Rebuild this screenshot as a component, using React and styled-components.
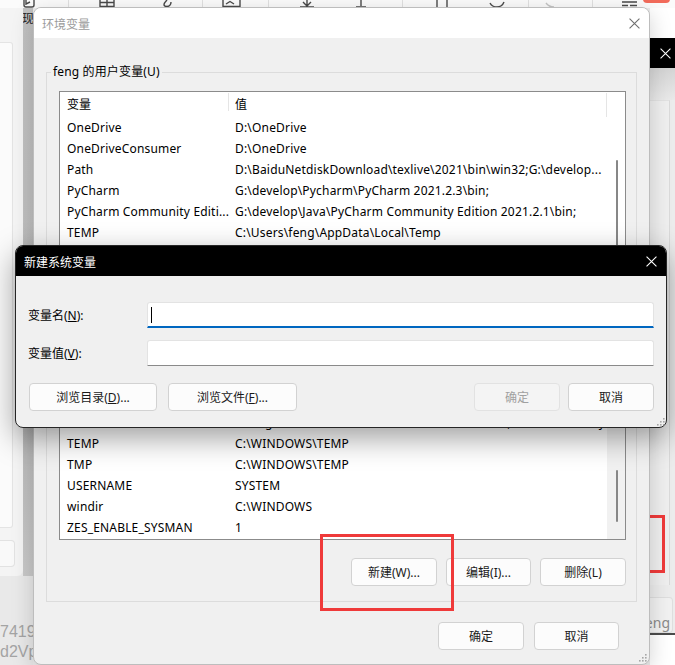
import React from 'react'
import styled, { createGlobalStyle } from 'styled-components'

const GlobalStyle = createGlobalStyle`
  html, body { margin: 0; padding: 0; }
  body {
    width: 675px;
    height: 665px;
    overflow: hidden;
    font-family: "Noto Sans", "Noto Sans CJK SC", sans-serif;
    font-size: 12px;
    color: #000;
  }
  * { box-sizing: border-box; }
`

const userVars = [
  ['OneDrive', 'D:\\OneDrive'],
  ['OneDriveConsumer', 'D:\\OneDrive'],
  ['Path', 'D:\\BaiduNetdiskDownload\\texlive\\2021\\bin\\win32;G:\\develop...'],
  ['PyCharm', 'G:\\develop\\Pycharm\\PyCharm 2021.2.3\\bin;'],
  ['PyCharm Community Editi...', 'G:\\develop\\Java\\PyCharm Community Edition 2021.2.1\\bin;'],
  ['TEMP', 'C:\\Users\\feng\\AppData\\Local\\Temp'],
]

const sysVars = [
  ['PSModulePath', '%ProgramFiles%\\WindowsPowerShell\\Modules;C:\\WINDOWS\\system32\\...'],
  ['TEMP', 'C:\\WINDOWS\\TEMP'],
  ['TMP', 'C:\\WINDOWS\\TEMP'],
  ['USERNAME', 'SYSTEM'],
  ['windir', 'C:\\WINDOWS'],
  ['ZES_ENABLE_SYSMAN', '1'],
]

/* ---------- desktop behind the dialogs ---------- */

const Desktop = styled.div`
  position: relative;
  width: 675px;
  height: 665px;
  overflow: hidden;
  display: grid;
  grid-template-columns: 33px 1fr 25px;
  grid-template-rows: 8px 1fr;
  background: #ececec;
`

const Toolbar = styled.div`
  grid-column: 1 / -1;
  background: #fbfbfb;
  overflow: hidden;
  svg { display: block; }
`

const LeftPane = styled.div`
  grid-column: 1;
  grid-row: 2;
  display: flex;
  flex-direction: column;
`

const AppWindow = styled.div`
  height: 568px;
  display: flex;
`

const AppContent = styled.div`
  width: 23px;
  background: #f4f4f4;
  border-bottom-right-radius: 6px;
  padding-top: 34px;
  display: flex;
  flex-direction: column;
  gap: 12px;
`

const SideCard = styled.div`
  width: 13px;
  height: 486px;
  background: #fbfbfb;
  border: 1px solid #e4e4e4;
  border-left: none;
  border-radius: 0 3px 3px 0;
`

const SideButton = styled.div`
  width: 15px;
  height: 27px;
  background: #f9f9f9;
  border: 1px solid #e2e2e2;
  border-left: none;
  border-radius: 0 4px 4px 0;
`

const ShadowBand = styled.div`
  width: 10px;
  background: linear-gradient(#c2c2c2, #bdbdbd 80%, #c9c9c9);
  overflow: hidden;
  padding-top: 2px;
  span {
    display: block;
    margin-left: -1px;
    color: #222;
    font-family: "Noto Sans CJK SC", sans-serif;
    font-size: 12px;
    line-height: 16px;
  }
`

const LeftFooter = styled.div`
  flex: 1;
  background: #e9e9e9;
  padding-top: 46px;
  color: #a4a4a4;
  font-family: "Liberation Sans", sans-serif;
  font-size: 16px;
  line-height: 20px;
  white-space: nowrap;
  overflow: hidden;
`

const RightPane = styled.div`
  grid-column: 3;
  grid-row: 2;
  display: flex;
  flex-direction: column;
`

const WhiteStrip = styled.div`
  height: 30px;
  background: #fff;
`

const BlackTab = styled.div`
  height: 30px;
  background: #000;
  display: flex;
  align-items: center;
  padding-left: 10px;
`

const ShadeStrip = styled.div`
  height: 32px;
  background: linear-gradient(#d4d4d4, #e9e9e9);
`

const SidePanel = styled.div`
  height: 485px;
  width: 20px;
  background: #efefef;
  border-top: 1px solid #e2e2e2;
  border-right: 1px solid #dadada;
`

const PanelGap = styled.div`
  height: 12px;
  background: #ececec;
`

const FengButton = styled.div`
  height: 36px;
  width: 23px;
  background: #f1f1f1;
  border: 1px solid #dedede;
  border-left: none;
  border-radius: 0 4px 4px 0;
  display: flex;
  justify-content: flex-end;
  align-items: flex-end;
  padding: 0 2px 1px 0;
  overflow: hidden;
  color: #8a8a8a;
  font-size: 14px;
  line-height: 16px;
`

const DarkLine = styled.div`
  height: 2px;
  background: #4b4b4b;
`

const WhiteBottom = styled.div`
  flex: 1;
  background: #fff;
`

const Annotation = styled.div`
  position: absolute;
  left: ${p => p.$x}px;
  top: ${p => p.$y}px;
  width: ${p => p.$w}px;
  height: ${p => p.$h}px;
  border: 3px solid #ef3a3a;
`

/* ---------- dialogs ---------- */

const Window = styled.div`
  position: absolute;
  left: ${p => p.$x}px;
  top: ${p => p.$y}px;
  width: ${p => p.$w}px;
  height: ${p => p.$h}px;
  background: #f0f0f0;
  border: 1px solid ${p => (p.$active ? '#262626' : '#bdbdbd')};
  border-radius: 8px;
  overflow: hidden;
  box-shadow: ${p => (p.$active ? '0 10px 30px rgba(0,0,0,0.38)' : '0 6px 22px rgba(0,0,0,0.18)')};
  display: flex;
  flex-direction: column;
`

const TitleBar = styled.div`
  height: 30px;
  flex: none;
  display: flex;
  align-items: center;
  justify-content: space-between;
  padding: 0 9px 0 8px;
  background: ${p => (p.$active ? '#000' : '#fff')};
  color: ${p => (p.$active ? '#fff' : '#9b9b9b')};
  font-family: "Noto Sans CJK SC", sans-serif;
  font-size: 12px;
  svg { display: block; }
`

const Body = styled.div`
  flex: 1;
  padding: 26px 12px 0;
  position: relative;
`

const GroupBox = styled.fieldset`
  margin: ${p => p.$top || 0}px 0 0;
  padding: 0 10px ${p => p.$bottom}px 12px;
  border: 1px solid #dcdcdc;
  min-width: 0;
`

const Legend = styled.legend`
  padding: 0 2px;
  margin-left: -8px;
  font-size: 12px;
  line-height: 16px;
  letter-spacing: 0.15px;
`

const ListBox = styled.div`
  margin-top: 11px;
  height: ${p => p.$h}px;
  border: 1px solid #8b8b8b;
  background: #fff;
  display: flex;
  overflow: hidden;
`

const ListMain = styled.div`
  flex: 1;
  min-width: 0;
  display: flex;
  flex-direction: column;
`

const HeaderRow = styled.div`
  height: 24px;
  flex: none;
  display: flex;
`

const HeaderCell = styled.div`
  width: ${p => (p.$w ? `${p.$w}px` : 'auto')};
  flex: ${p => (p.$w ? 'none' : 1)};
  padding-left: ${p => p.$pad}px;
  padding-bottom: 2px;
  display: flex;
  align-items: center;
  font-family: "Noto Sans CJK SC", sans-serif;
  position: relative;
  &::after {
    content: '';
    position: absolute;
    right: 0;
    top: 1px;
    height: ${p => (p.$w ? 18 : 24)}px;
    width: 1px;
    background: #e5e5e5;
  }
`

const Row = styled.div`
  height: 21px;
  flex: none;
  display: flex;
  align-items: center;
  padding-top: 2px;
  white-space: nowrap;
  letter-spacing: 0.18px;
`

const Cell = styled.div`
  width: ${p => (p.$w ? `${p.$w}px` : 'auto')};
  flex: ${p => (p.$w ? 'none' : 1)};
  min-width: 0;
  padding-left: ${p => p.$pad}px;
  overflow: hidden;
`

const ScrollTrack = styled.div`
  width: 18px;
  flex: none;
  background: ${p => p.$bg};
  padding-top: ${p => p.$thumbTop}px;
`

const Thumb = styled.div`
  width: 2px;
  height: ${p => p.$h}px;
  margin-left: 9px;
  border-radius: 1px;
  background: #878787;
`

const ButtonRow = styled.div`
  display: flex;
  justify-content: ${p => p.$justify || 'flex-end'};
  gap: ${p => p.$gap}px;
  margin-top: ${p => p.$top}px;
  padding-right: ${p => p.$right || 0}px;
`

const Group = styled.div`
  display: flex;
  gap: ${p => p.$gap}px;
  margin-left: ${p => p.$left || 0}px;
`

const Button = styled.button`
  width: ${p => p.$w}px;
  height: 28px;
  margin: 0;
  padding: 0;
  border: 1px solid ${p => (p.disabled ? '#e2e2e2' : '#d2d2d2')};
  border-radius: 4px;
  background: ${p => (p.disabled ? '#f4f4f4' : '#fcfcfc')};
  color: ${p => (p.disabled ? '#a0a0a0' : '#1a1a1a')};
  font-family: "Noto Sans", "Noto Sans CJK SC", sans-serif;
  font-size: 12px;
  white-space: nowrap;
`

const FormGrid = styled.div`
  display: grid;
  grid-template-columns: 119px 1fr;
  grid-auto-rows: 26px;
  row-gap: 12px;
  align-items: center;
`

const FieldLabel = styled.label`
  font-family: "Noto Sans", "Noto Sans CJK SC", sans-serif;
  font-size: 12px;
`

const TextField = styled.div`
  height: 26px;
  background: #fff;
  border: 1px solid #e3e3e3;
  border-bottom: ${p => (p.$focus ? '2px solid #0067c0' : '1px solid #8a8a8a')};
  border-radius: 3px 3px 0 0;
  display: flex;
  align-items: center;
  padding-left: 3px;
`

const Caret = styled.span`
  width: 1px;
  height: 16px;
  background: #000;
`

const Grip = styled.svg`
  position: absolute;
  right: ${p => p.$r}px;
  bottom: ${p => p.$b}px;
`

function CloseIcon({ color, size = 10 }) {
  return (
    <svg width={size} height={size} viewBox="0 0 10 10">
      <path d="M0.5 0.5 L9.5 9.5 M9.5 0.5 L0.5 9.5" stroke={color} strokeWidth="1" />
    </svg>
  )
}

function ResizeGrip({ r, b }) {
  const dots = [[6, 0], [3, 3], [6, 3], [0, 6], [3, 6], [6, 6]]
  return (
    <Grip $r={r} $b={b} width="8" height="8" viewBox="0 0 8 8">
      {dots.map(([x, y]) => (
        <rect key={`${x}-${y}`} x={x} y={y} width="1.6" height="1.6" fill="#a6a6a6" />
      ))}
    </Grip>
  )
}

function ToolbarIcons() {
  return (
    <svg width="675" height="8" viewBox="0 0 675 8">
      <g stroke="#e1e1e1" strokeWidth="1">
        <path d="M68.5 0 V8 M202.5 0 V8 M268.5 0 V8 M402.5 0 V8 M528.5 0 V8 M592.5 0 V8" />
      </g>
      <g stroke="#4a4a4a" strokeWidth="1.4" fill="none">
        <path d="M24 0 V5 Q24 7 26 7 H32 Q34 7 34 5 V0" />
        <path d="M26 0 V4 L30 2" />
        <path d="M100 0 V6.5 H114 V0 M107 0 V6.5 M100 2.5 H114" />
        <path d="M167 0 Q161 6 167 6.5 Q171 6 171 2" />
        <path d="M223 0 V6.5 H240 V0 M226 4 L230 1.5 L234 4" />
        <path d="M307 0 V5 M303 2 L307 6 L311 2 M300 7 H314" />
        <path d="M361 0 V6 M356 7 H366" />
        <path d="M437 0 V7 M447 0 V7" />
        <path d="M490 3 Q492 7 497 7 Q502 7 504 2" />
        <path d="M622 2 H637 M622 5.5 H628 M630 5.5 H637" />
      </g>
      <path d="M546 3 Q549 7 554 7" stroke="#c4c4c4" strokeWidth="1.4" fill="none" />
      <rect x="643" y="-5" width="27" height="8" rx="4" fill="#f26b5b" />
    </svg>
  )
}

function VarList({ rows, height, thumbTop, thumbH, track }) {
  return (
    <ListBox $h={height}>
      <ListMain>
        <HeaderRow>
          <HeaderCell $w={169} $pad={7}>变量</HeaderCell>
          <HeaderCell $pad={6}>值</HeaderCell>
        </HeaderRow>
        {rows.map(([name, value], i) => (
          <Row key={i}>
            <Cell $w={169} $pad={7}>{name}</Cell>
            <Cell $pad={6}>{value}</Cell>
          </Row>
        ))}
      </ListMain>
      <ScrollTrack $bg={track} $thumbTop={thumbTop}>
        <Thumb $h={thumbH} />
      </ScrollTrack>
    </ListBox>
  )
}

export default function App() {
  return (
    <>
      <GlobalStyle />
      <Desktop>
        <Toolbar>
          <ToolbarIcons />
        </Toolbar>

        <LeftPane>
          <AppWindow>
            <AppContent>
              <SideCard />
              <SideButton />
            </AppContent>
            <ShadowBand>
              <span>现</span>
            </ShadowBand>
          </AppWindow>
          <LeftFooter>
            7419
            <br />
            d2Vpl
          </LeftFooter>
        </LeftPane>

        <RightPane>
          <WhiteStrip />
          <BlackTab>
            <CloseIcon color="#fff" size={11} />
          </BlackTab>
          <ShadeStrip />
          <SidePanel />
          <PanelGap />
          <FengButton>feng</FengButton>
          <DarkLine />
          <WhiteBottom />
        </RightPane>

        <Annotation $x={600} $y={515} $w={65} $h={58} />

        <Window $x={33} $y={7} $w={617} $h={658}>
          <TitleBar>
            <span>环境变量</span>
            <CloseIcon color="#6f6f6f" size={11} />
          </TitleBar>
          <Body>
            <GroupBox $bottom={12}>
              <Legend>feng 的用户变量(U)</Legend>
              <VarList rows={userVars} height={200} thumbTop={68} thumbH={120} track="#fff" />
              <ButtonRow $top={12} $gap={9}>
                <Button $w={86}>新建(N)...</Button>
                <Button $w={85}>编辑(E)...</Button>
                <Button $w={86}>删除(D)</Button>
              </ButtonRow>
            </GroupBox>
            <GroupBox $top={15} $bottom={15}>
              <Legend>系统变量(S)</Legend>
              <VarList rows={sysVars} height={154} thumbTop={83} thumbH={52} track="#f1f1f1" />
              <ButtonRow $top={18} $gap={9}>
                <Button $w={86}>新建(W)...</Button>
                <Button $w={85}>编辑(I)...</Button>
                <Button $w={86}>删除(L)</Button>
              </ButtonRow>
            </GroupBox>
            <ButtonRow $top={20} $gap={10} $right={18}>
              <Button $w={86}>确定</Button>
              <Button $w={85}>取消</Button>
            </ButtonRow>
            <ResizeGrip r={2} b={2} />
          </Body>
        </Window>

        <Window $active $x={15} $y={245} $w={652} $h={183}>
          <TitleBar $active>
            <span>新建系统变量</span>
            <CloseIcon color="#fff" size={11} />
          </TitleBar>
          <Body>
            <FormGrid>
              <FieldLabel>变量名(<u>N</u>):</FieldLabel>
              <TextField $focus>
                <Caret />
              </TextField>
              <FieldLabel>变量值(<u>V</u>):</FieldLabel>
              <TextField />
            </FormGrid>
            <ButtonRow $top={17} $justify="space-between">
              <Group $gap={11} $left={1}>
                <Button $w={128}>浏览目录(<u>D</u>)...</Button>
                <Button $w={129}>浏览文件(<u>F</u>)...</Button>
              </Group>
              <Group $gap={8}>
                <Button $w={86} disabled>确定</Button>
                <Button $w={86}>取消</Button>
              </Group>
            </ButtonRow>
            <ResizeGrip r={1} b={1} />
          </Body>
        </Window>

        <Annotation $x={320} $y={534} $w={134} $h={77} />
      </Desktop>
    </>
  )
}
